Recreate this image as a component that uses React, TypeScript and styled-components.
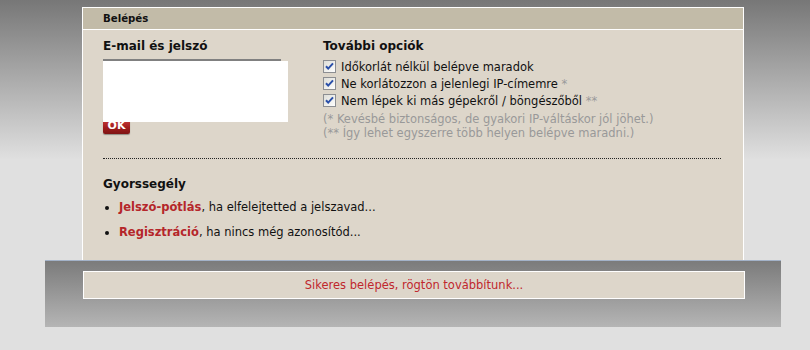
import React from "react";
import styled, { createGlobalStyle } from "styled-components";

const GlobalStyle = createGlobalStyle`
  html, body {
    margin: 0;
    padding: 0;
  }
  body {
    background: #e0e0e0 linear-gradient(#777777 0px, #e0e0e0 160px) no-repeat;
    font-family: "DejaVu Sans", Verdana, sans-serif;
    font-size: 11.5px;
    color: #111;
    min-height: 350px;
  }
`;

const Page = styled.div`
  padding-top: 7px;
`;

const Panel = styled.div`
  width: 660px;
  margin-left: 82px;
  border: 1px solid #ffffff;
  border-bottom: none;
  background: #ddd6ca;
`;

const PanelHeader = styled.div`
  height: 21px;
  line-height: 21px;
  padding-left: 20px;
  background: #c2bba8;
  border-bottom: 1px solid #ffffff;
  font-weight: bold;
  font-size: 10.2px;
`;

const PanelBody = styled.div`
  height: 230px;
  padding: 9px 22px 0 20px;
  box-sizing: border-box;
`;

const Columns = styled.div`
  display: grid;
  grid-template-columns: 220px 1fr;
`;

const Title = styled.div`
  font-weight: bold;
  font-size: 12px;
  line-height: 14px;
`;

const Fields = styled.div`
  position: relative;
  margin-top: 6px;
  display: flex;
  flex-direction: column;
  align-items: flex-start;
`;

const Input = styled.div`
  width: 178px;
  height: 24px;
  background: #fff;
  border-top: 2px solid #808080;
  margin-bottom: 6px;
`;

const OkButton = styled.button`
  margin-top: -5px;
  width: 27px;
  height: 16px;
  padding: 0;
  border: none;
  border-radius: 2px;
  background: linear-gradient(#d04040, #a01c1c 60%, #7f1414);
  box-shadow: 0 1px 1px rgba(0, 0, 0, 0.35);
  color: #fff;
  font-family: "DejaVu Sans", Verdana, sans-serif;
  font-weight: bold;
  font-size: 11px;
  line-height: 14px;
`;

const Redaction = styled.div`
  position: absolute;
  top: 2px;
  left: 0;
  width: 185px;
  height: 61px;
  background: #ffffff;
`;

const Options = styled.div`
  margin-top: 5px;
`;

const OptionRow = styled.label`
  display: flex;
  align-items: center;
  gap: 5px;
  height: 17px;
`;

const Star = styled.span`
  color: #9a9a9a;
`;

const Notes = styled.div`
  margin-top: 3px;
  color: #999999;
  line-height: 14px;
`;

const Divider = styled.div`
  margin-top: 18px;
  border-top: 1px dotted #222;
`;

const HelpTitle = styled(Title)`
  margin-top: 18px;
`;

const HelpList = styled.ul`
  margin: 4px 0 0 0;
  padding: 0 0 0 16px;
  list-style: disc;
  li {
    line-height: 25px;
  }
`;

const RedLink = styled.a`
  color: #b5262a;
  font-weight: bold;
  text-decoration: none;
`;

const Footer = styled.div`
  width: 736px;
  height: 67px;
  margin-left: 45px;
  border-top: 1px solid #a3b2c8;
  background: linear-gradient(#7b7b7b, #b5b5b5);
  padding-top: 10px;
  box-sizing: border-box;
`;

const FooterBox = styled.div`
  width: 660px;
  height: 26px;
  margin-left: 38px;
  border: 1px solid #ffffff;
  background: #ddd6ca;
  color: #c0272d;
  text-align: center;
  line-height: 26px;
`;

const CheckBox = () => (
  <svg width="13" height="13" viewBox="0 0 13 13">
    <defs>
      <linearGradient id="cbg" x1="0" y1="0" x2="1" y2="1">
        <stop offset="0" stopColor="#dcdcd6" />
        <stop offset="1" stopColor="#ffffff" />
      </linearGradient>
    </defs>
    <rect x="0.5" y="0.5" width="12" height="12" fill="url(#cbg)" stroke="#8c8e92" />
    <path d="M3 6.2 L5.2 8.6 L10 3.4" fill="none" stroke="#2a4fa8" strokeWidth="2" />
  </svg>
);

const options: { text: string; star?: string }[] = [
  { text: "Időkorlát nélkül belépve maradok" },
  { text: "Ne korlátozzon a jelenlegi IP-címemre", star: "*" },
  { text: "Nem lépek ki más gépekről / böngészőből", star: "**" },
];

export default function App() {
  return (
    <Page>
      <GlobalStyle />
      <Panel>
        <PanelHeader>Belépés</PanelHeader>
        <PanelBody>
          <Columns>
            <div>
              <Title>E-mail és jelszó</Title>
              <Fields>
                <Input />
                <Input />
                <OkButton>OK</OkButton>
                <Redaction />
              </Fields>
            </div>
            <div>
              <Title>További opciók</Title>
              <Options>
                {options.map((o) => (
                  <OptionRow key={o.text}>
                    <CheckBox />
                    <span>
                      {o.text}
                      {o.star && <Star> {o.star}</Star>}
                    </span>
                  </OptionRow>
                ))}
              </Options>
              <Notes>
                <div>(* Kevésbé biztonságos, de gyakori IP-váltáskor jól jöhet.)</div>
                <div>(** Így lehet egyszerre több helyen belépve maradni.)</div>
              </Notes>
            </div>
          </Columns>
          <Divider />
          <HelpTitle>Gyorssegély</HelpTitle>
          <HelpList>
            <li>
              <RedLink href="#">Jelszó-pótlás</RedLink>, ha elfelejtetted a jelszavad...
            </li>
            <li>
              <RedLink href="#">Regisztráció</RedLink>, ha nincs még azonosítód...
            </li>
          </HelpList>
        </PanelBody>
      </Panel>
      <Footer>
        <FooterBox>Sikeres belépés, rögtön továbbítunk...</FooterBox>
      </Footer>
    </Page>
  );
}
